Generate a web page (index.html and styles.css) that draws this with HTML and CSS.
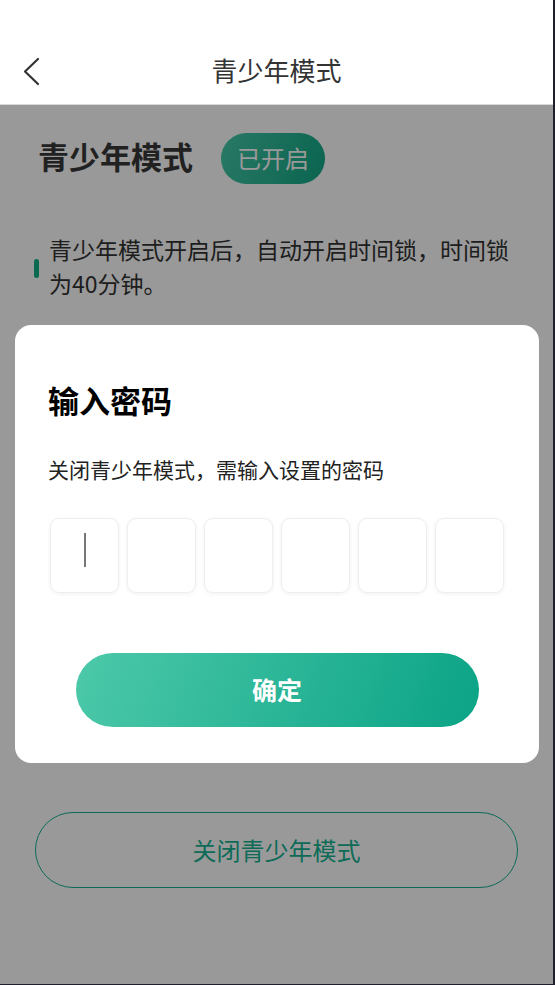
FILE: index.html
```html
<!DOCTYPE html>
<html lang="zh-CN">
<head>
  <meta charset="UTF-8" />
  <meta name="viewport" content="width=device-width, initial-scale=1.0"/>
  <title>青少年模式</title>
  <link rel="stylesheet" href="styles.css">
</head>
<body>
  <div class="page">
    <header class="header">
      <div class="nav">
        <svg class="back" width="20" height="30" viewBox="0 0 20 30">
          <polyline points="15,3 2,15.5 15,28" fill="none" stroke="#333" stroke-width="2.2" stroke-linecap="round" stroke-linejoin="round"/>
        </svg>
        <div class="nav-title">青少年模式</div>
      </div>
    </header>

    <div class="content">
      <div class="mode-head">
        <h1>青少年模式</h1>
        <span class="badge">已开启</span>
      </div>

      <div class="desc">
        <span class="desc-bar"></span>
        <p>青少年模式开启后，自动开启时间锁，时间锁为40分钟。</p>
      </div>

      <button class="close-btn">关闭青少年模式</button>
    </div>

    <div class="mask">
      <div class="dialog">
        <h2>输入密码</h2>
        <p class="dialog-tip">关闭青少年模式，需输入设置的密码</p>
        <div class="code-row">
          <div class="code-box"><span class="cursor"></span></div>
          <div class="code-box"></div>
          <div class="code-box"></div>
          <div class="code-box"></div>
          <div class="code-box"></div>
          <div class="code-box"></div>
        </div>
        <button class="confirm-btn">确定</button>
      </div>
    </div>
  </div>
</body>
</html>
```

FILE: styles.css
```css
* {
  box-sizing: border-box;
}

body {
  margin: 0;
  font-family: "Noto Sans CJK SC", "Noto Sans", sans-serif;
  background: #1e1e2c;
}

.page {
  position: relative;
  height: 985px;
  background: #fff;
  border-right: 2px solid #1e1e2c;
  border-bottom: 1px solid #1e1e2c;
  overflow: hidden;
}

.header {
  height: 105px;
  padding-top: 34px;
  border-bottom: 1px solid #d8d8d8;
}

.nav {
  position: relative;
  height: 70px;
  display: flex;
  align-items: center;
  justify-content: center;
}

.back {
  position: absolute;
  left: 23px;
  top: 22px;
}

.nav-title {
  font-size: 26px;
  color: #333;
}

.content {
  padding: 0 35px;
}

.mode-head {
  display: flex;
  align-items: center;
  padding-left: 3px;
  margin-top: 28px;
  height: 51px;
}

.mode-head h1 {
  margin: 0 0 6px;
  font-size: 31px;
  font-weight: bold;
  color: #383838;
  line-height: 40px;
}

.badge {
  margin-left: 28px;
  width: 104px;
  height: 51px;
  padding-bottom: 2px;
  border-radius: 26px;
  background: linear-gradient(110deg, #45c9a9, #10a884);
  color: #fff;
  font-size: 24px;
  display: flex;
  align-items: center;
  justify-content: center;
}

.desc {
  display: flex;
  align-items: center;
  margin-top: 48px;
}

.desc-bar {
  flex: none;
  width: 5px;
  height: 19px;
  border-radius: 3px;
  background: #11b185;
  margin: 4px 10px 0 -1px;
}

.desc p {
  margin: 0;
  font-size: 23px;
  line-height: 34px;
  color: #333;
  width: 470px;
}

.close-btn {
  display: block;
  width: 100%;
  height: 76px;
  margin-top: 512px;
  padding-bottom: 3px;
  border: 1.5px solid #16b293;
  border-radius: 38px;
  background: transparent;
  color: #16b293;
  font-family: inherit;
  font-size: 24px;
}

.mask {
  position: absolute;
  top: 105px;
  left: 0;
  right: 0;
  bottom: 0;
  background: rgba(0, 0, 0, 0.4);
  display: flex;
  align-items: center;
  justify-content: center;
}

.dialog {
  width: 524px;
  height: 438px;
  margin: 0 0 2px 1px;
  background: #fff;
  border-radius: 16px;
  padding: 55px 33px 0;
}

.dialog h2 {
  margin: 0;
  font-size: 31px;
  line-height: 40px;
  font-weight: bold;
  color: #000;
}

.dialog-tip {
  margin: 34px 0 0;
  font-size: 21px;
  line-height: 30px;
  color: #222;
}

.code-row {
  display: flex;
  justify-content: center;
  gap: 8.5px;
  margin-top: 34px;
}

.code-box {
  width: 68.5px;
  height: 75px;
  border: 1px solid #eeeeee;
  border-radius: 9px;
  box-shadow: 0 1px 4px rgba(0, 0, 0, 0.06);
  display: flex;
  justify-content: center;
  padding-top: 14px;
}

.cursor {
  width: 2px;
  height: 34px;
  background: #777;
}

.confirm-btn {
  display: block;
  width: 403px;
  height: 74px;
  margin: 60px auto 0;
  padding-bottom: 3px;
  border: none;
  border-radius: 37px;
  background: linear-gradient(110deg, #4cc9a9, #0ba386);
  color: #fff;
  font-family: inherit;
  font-size: 25px;
  font-weight: bold;
}
```
